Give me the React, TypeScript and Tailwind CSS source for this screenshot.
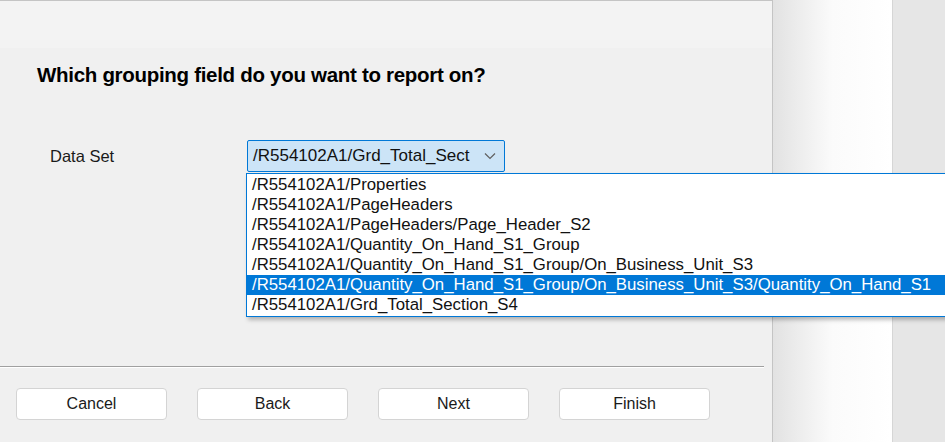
const ITEMS = [
  "/R554102A1/Properties",
  "/R554102A1/PageHeaders",
  "/R554102A1/PageHeaders/Page_Header_S2",
  "/R554102A1/Quantity_On_Hand_S1_Group",
  "/R554102A1/Quantity_On_Hand_S1_Group/On_Business_Unit_S3",
  "/R554102A1/Quantity_On_Hand_S1_Group/On_Business_Unit_S3/Quantity_On_Hand_S1",
  "/R554102A1/Grd_Total_Section_S4",
];

const SELECTED = 5;

const WizardButton = ({ label }: { label: string }) => (
  <button className="w-[151px] h-[32px] bg-white border border-[#d4d4d4] rounded-[4px] text-[16px] text-[#1a1a1a] flex items-center justify-center">
    {label}
  </button>
);

const App = () => {
  return (
    <div
      className="relative w-[945px] h-[442px] overflow-hidden flex bg-[#e6e6e6]"
      style={{ fontFamily: '"Liberation Sans", Arial, sans-serif' }}
    >
      {/* Wizard dialog */}
      <div className="w-[773px] h-full flex flex-col bg-[#f0f0f0] border-t border-r border-[#c4c4c4] shrink-0">
        <div className="h-[47px] bg-[#f3f3f3]" />
        <div className="flex-1 flex flex-col">
          <h1 className="pl-[37px] pt-[14px] text-[20.5px] leading-[26px] font-bold text-black tracking-[-0.3px]">
            Which grouping field do you want to report on?
          </h1>

          {/* Data set row */}
          <div className="flex items-center mt-[52px] pl-[50px]">
            <span className="w-[197px] text-[16.5px] text-[#1a1a1a]">Data Set</span>
            <div className="w-[258px] h-[32px] bg-[#cce4f7] border border-[#0078d7] rounded-[2px] flex items-center justify-between pl-[5px] pr-[8px]">
              <span className="text-[17px] text-[#111]">/R554102A1/Grd_Total_Sect</span>
              <svg width="12" height="8" viewBox="0 0 12 8" fill="none">
                <path d="M1 1.5 L6 6.5 L11 1.5" stroke="#606060" strokeWidth="1.2" />
              </svg>
            </div>
          </div>

          <div className="flex-1" />

          {/* Separator + buttons */}
          <div className="mr-[8px] border-t border-[#a0a0a0] border-b border-b-white" />
          <div className="flex gap-[30px] pl-[16px] pt-[20px] pb-[22px]">
            <WizardButton label="Cancel" />
            <WizardButton label="Back" />
            <WizardButton label="Next" />
            <WizardButton label="Finish" />
          </div>
        </div>
      </div>

      {/* Neighbouring window area */}
      <div className="w-[120px] h-full shrink-0 bg-gradient-to-r from-[#e2e2e2] via-[#fbfbfb] to-white border-r border-[#d6d6d6]" />
      <div className="flex-1 h-full bg-[#e6e6e6]" />

      {/* Open dropdown list */}
      <div className="absolute left-[246px] top-[173px] w-[720px] bg-white border border-[#0078d7] shadow-[2px_3px_4px_rgba(0,0,0,0.25)] py-[1px]">
        {ITEMS.map((item, i) => (
          <div
            key={item}
            className={
              i === SELECTED
                ? "h-[20px] leading-[20px] pl-[5px] text-[16.8px] bg-[#0078d7] text-white whitespace-nowrap"
                : "h-[20px] leading-[20px] pl-[5px] text-[16.8px] text-[#111] whitespace-nowrap"
            }
          >
            {item}
          </div>
        ))}
      </div>
    </div>
  );
};

export default App;
